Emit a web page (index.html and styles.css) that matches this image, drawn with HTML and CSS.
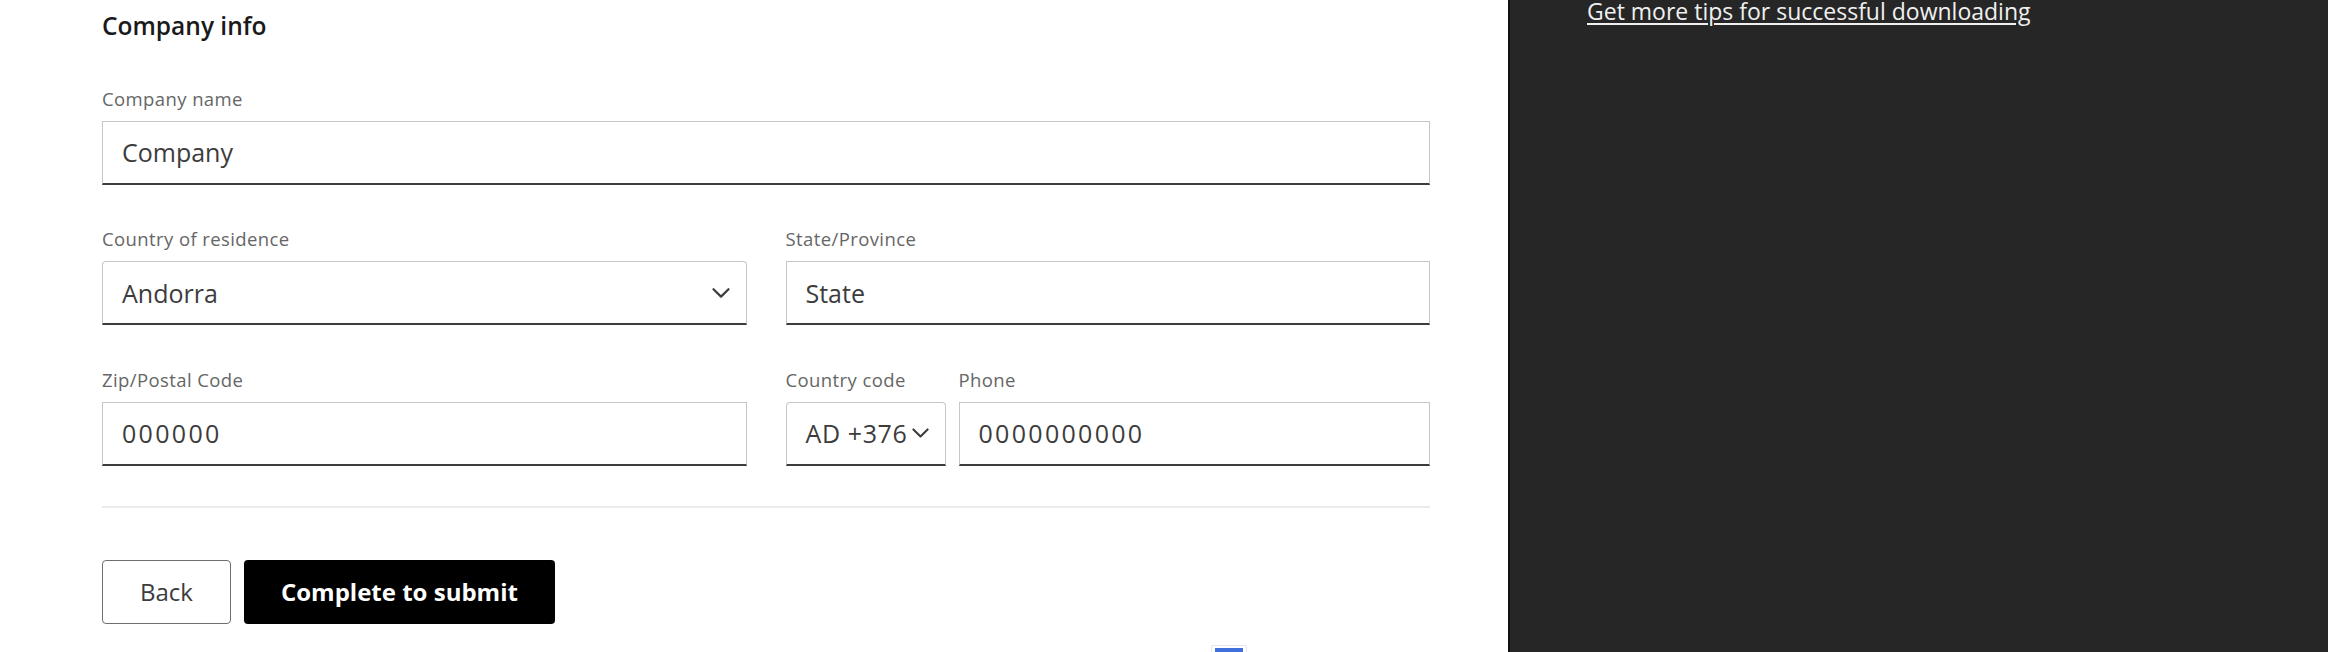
FILE: index.html
```html
<!DOCTYPE html>
<html lang="en">
<head>
<meta charset="utf-8">
<title>Company info</title>
<link rel="stylesheet" href="styles.css">
</head>
<body>
<div class="page">
  <main class="form-col">
    <form class="form">
      <h2 class="heading">Company info</h2>
      <div class="fields">
        <div class="field">
          <label class="label">Company name</label>
          <div class="input"><span class="value">Company</span></div>
        </div>
        <div class="row">
          <div class="field">
            <label class="label">Country of residence</label>
            <div class="input select">
              <span class="value">Andorra</span>
              <svg class="chevron" viewBox="0 0 18 10" width="18" height="10"><path d="M1.5 1.2 L9 8.6 L16.5 1.2" fill="none" stroke="#3c3c3c" stroke-width="2.2" stroke-linecap="round" stroke-linejoin="round"/></svg>
            </div>
          </div>
          <div class="field">
            <label class="label">State/Province</label>
            <div class="input"><span class="value">State</span></div>
          </div>
        </div>
        <div class="row">
          <div class="field">
            <label class="label">Zip/Postal Code</label>
            <div class="input"><span class="value digits">000000</span></div>
          </div>
          <div class="phone-group">
            <div class="field code">
              <label class="label">Country code</label>
              <div class="input select code-select">
                <span class="value code-value">AD +376</span>
                <svg class="chevron" viewBox="0 0 18 10" width="17" height="10"><path d="M1.5 1.2 L9 8.6 L16.5 1.2" fill="none" stroke="#3c3c3c" stroke-width="2.2" stroke-linecap="round" stroke-linejoin="round"/></svg>
              </div>
            </div>
            <div class="field phone">
              <label class="label">Phone</label>
              <div class="input"><span class="value digits">0000000000</span></div>
            </div>
          </div>
        </div>
      </div>
      <hr class="divider">
      <div class="actions">
        <button type="button" class="btn btn-back">Back</button>
        <button type="button" class="btn btn-primary">Complete to submit</button>
      </div>
    </form>
  </main>
  <aside class="side">
    <a class="tips-link" href="#">Get more tips for successful downloading</a>
  </aside>
</div>
<div class="widget"><span class="widget-bar"></span></div>
</body>
</html>
```
FILE: styles.css
```css
html, body {
  margin: 0;
  padding: 0;
  height: 100%;
  overflow: hidden;
  background: #ffffff;
  font-family: "Open Sans", "Noto Sans", "Liberation Sans", sans-serif;
}

.page {
  display: flex;
  height: 100vh;
}

.form-col {
  flex: 0 0 1508px;
  box-sizing: border-box;
  padding: 10.5px 0 0 102px;
}

.form {
  width: 1328px;
  margin: 0;
}

.heading {
  margin: 0 0 46px 0;
  font-size: 24.5px;
  line-height: 30px;
  font-weight: 600;
  color: #1a1a1a;
}

.fields {
  display: flex;
  flex-direction: column;
  gap: 42.5px;
}

.row {
  display: grid;
  grid-template-columns: 1fr 1fr;
  column-gap: 39px;
}

.field {
  display: flex;
  flex-direction: column;
  min-width: 0;
}

.label {
  display: block;
  margin-bottom: 10px;
  font-size: 18.5px;
  line-height: 24px;
  letter-spacing: 0.4px;
  color: #666666;
}

.input {
  box-sizing: border-box;
  height: 64px;
  display: flex;
  align-items: center;
  padding: 0 16px 0 19px;
  border: 1px solid #c6c6c6;
  border-bottom: 2px solid #3c3c3c;
  background: #ffffff;
}

.value {
  font-size: 25px;
  color: #3c3c3c;
  white-space: nowrap;
}

.digits {
  letter-spacing: 2.3px;
}

.select {
  border-radius: 4px 4px 0 0;
}

.chevron {
  margin-left: auto;
  flex: none;
}

.phone-group {
  display: flex;
  gap: 13px;
}

.code {
  flex: 0 0 160px;
}

.code-select {
  padding-right: 16px;
}

.code-value {
  letter-spacing: 0.6px;
}

.phone {
  flex: 1 1 auto;
}

.divider {
  margin: 40px 0 0 0;
  border: 0;
  height: 2px;
  background: #ebebeb;
}

.actions {
  display: flex;
  gap: 13px;
  margin-top: 52px;
}

.btn {
  box-sizing: border-box;
  height: 64px;
  padding: 0 37px;
  border-radius: 4px;
  font-family: "Open Sans", "Noto Sans", "Liberation Sans", sans-serif;
  font-size: 24px;
  cursor: pointer;
}

.btn-back {
  background: #ffffff;
  color: #3c3c3c;
  border: 1.5px solid #6f6f6f;
  font-weight: 400;
}

.btn-primary {
  background: #000000;
  color: #ffffff;
  border: 0;
  font-weight: 700;
}

.side {
  flex: 0 0 820px;
  box-sizing: border-box;
  background: #262626;
  border-left: 2px solid #111111;
  padding-left: 77px;
}

.tips-link {
  display: inline-block;
  font-size: 23px;
  line-height: 22px;
  color: #f0f0f0;
  text-decoration: underline;
  text-decoration-thickness: 1.5px;
  text-underline-offset: 3px;
}

.widget {
  position: absolute;
  left: 1211px;
  top: 645px;
  width: 36px;
  height: 24px;
  box-sizing: border-box;
  padding: 2px 3px;
  background: #ffffff;
  border: 1px solid #dfe5f3;
  border-radius: 2px;
}

.widget-bar {
  display: block;
  height: 18px;
  background: #3f70dc;
}
```
